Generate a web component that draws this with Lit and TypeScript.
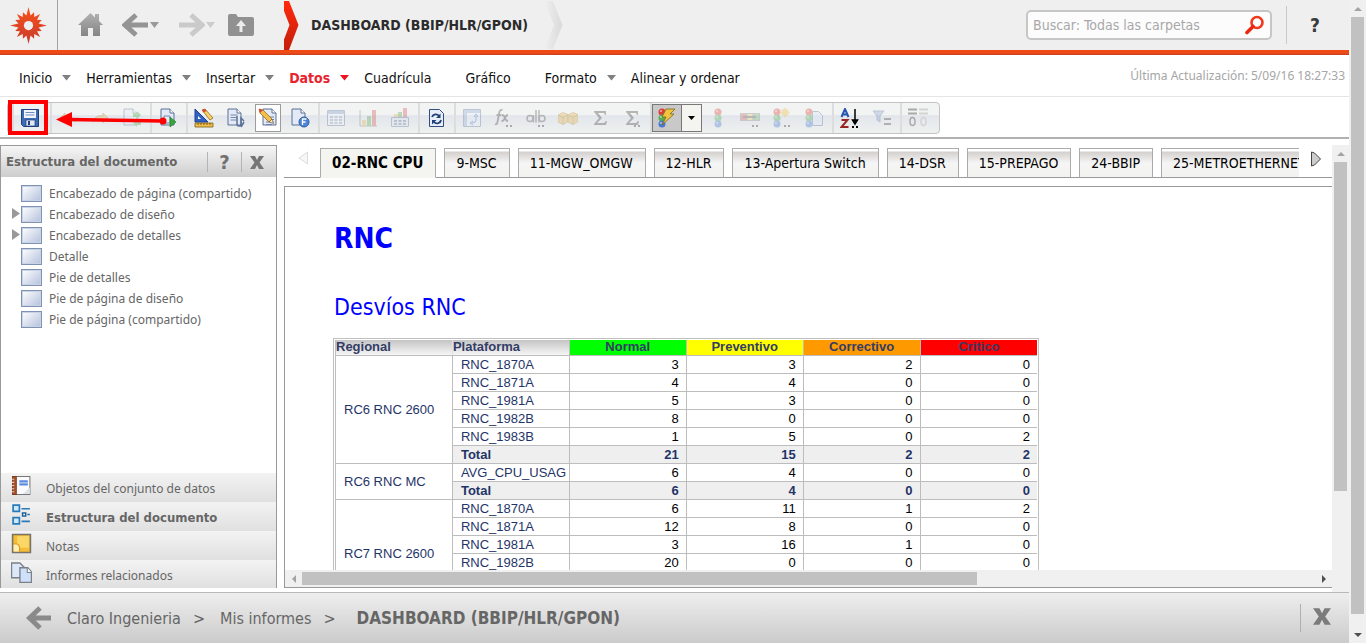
import { LitElement, html, css, svg, nothing, TemplateResult } from 'lit';
import { customElement, property } from 'lit/decorators.js';
import { classMap } from 'lit/directives/class-map.js';

/* ---------- shared icon fragments ---------- */

const page = (x = 4, y = 2) => svg`
  <path d="M${x} ${y}h9l4 4v12h-13z" fill="#e3eaf6" stroke="#5a7098"/>
  <path d="M${x + 9} ${y}v4h4" fill="#fff" stroke="#5a7098"/>`;

const pencil = svg`
  <path d="M1 1l4 1 9 9-3 3-9-9z" fill="#f3c04c" stroke="#9a6a1c" stroke-width=".8"/>
  <path d="M1 1l4 1-3 3z" fill="#d2483c"/>
  <path d="M11 14l3-3 1.500 4.500z" fill="#f5e2c3" stroke="#6b522c" stroke-width=".6"/>`;

const lights = (x: number) => svg`
  <circle cx="${x}" cy="4" r="3.500" fill="#dd3f3a"/>
  <circle cx="${x}" cy="10" r="3.500" fill="#57ad55"/>
  <circle cx="${x}" cy="16" r="3.500" fill="#4779cf"/>
  <circle cx="${x - 1}" cy="3" r="1" fill="#fff" opacity=".6"/>
  <circle cx="${x - 1}" cy="9" r="1" fill="#fff" opacity=".6"/>
  <circle cx="${x - 1}" cy="15" r="1" fill="#fff" opacity=".6"/>`;

const dots = svg`<path d="M12 17h2v2h-2zM16 17h2v2h-2z" fill="#333"/>`;

const sigma = svg`<path d="M4 3h12v4h-1l-1-2H8l4 5-5 5h7l2-2h1l-1 4H4v-1l5-6-5-6z" fill="#444"/>`;

const cube = (x: number) => svg`
  <path d="M${x} 7l5-2.500 5 2v7l-5 3-5-2.500z" fill="#eab94a" stroke="#a8802c" stroke-width=".8"/>
  <path d="M${x} 7l5 2.500 5-3M${x + 5} 9.500v7" fill="none" stroke="#a8802c" stroke-width=".8"/>`;

const icons: Record<string, TemplateResult> = {
  save: svg`
    <path d="M1.500 1.500h17v17h-15l-2-2z" fill="#3d6cb6" stroke="#1e3f80"/>
    <path d="M4 2h12v8H4z" fill="#f2f6fc"/><path d="M5.500 4.500h9M5.500 7h9" stroke="#6c8ec4"/>
    <path d="M6 12h9v6H6z" fill="#e4e9f1" stroke="#1e3f80" stroke-width=".7"/><path d="M8 13h2v4H8z" fill="#1e3f80"/>`,
  undo: svg`<path d="M2 10l5-5v3c6-1 9 2 10 6-3-3-6-3-10-2v3z" fill="#dfb65a" stroke="#a98434"/>`,
  redo: svg`<path d="M18 10l-5-5v3c-6-1-9 2-10 6 3-3 6-3 10-2v3z" fill="#dfb65a" stroke="#a98434"/>`,
  swap: svg`${page(2, 1)}<path d="M11 5h4V3l4 4-4 4V9h-4zM19 13h-4v-2l-4 4 4 4v-2h4z" fill="#49a849"/>`,
  run: svg`${page(3, 1)}<path d="M6 8h6v7H6z" fill="none" stroke="#7288ad"/><path d="M12 9l6 5-6 5z" fill="#35a83a" stroke="#20752a" stroke-width=".6"/>`,
  design: svg`
    <path d="M1 1v13h13z" fill="#2f62c4" stroke="#1c3f8c"/><path d="M4 8v3h3z" fill="#fff"/>
    <path d="M1 15h18v4H1z" fill="#f0c14a" stroke="#7c5a16" stroke-width=".8"/><path d="M4 15v2M7 15v2M10 15v2M13 15v2M16 15v2" stroke="#7c5a16"/>
    <path d="M8 2l3-1 8 9-3 2z" fill="#f7cf68" stroke="#9a6a1c" stroke-width=".8"/><path d="M8 2l3-1 1.500 2-3 1.500z" fill="#d2483c"/>`,
  attach: svg`${page(2, 1)}<path d="M4.500 7h7M4.500 9.500h6M4.500 12h6" stroke="#7288ad"/><path d="M11 8v8a2 2 0 0 0 4 0v-6l3 3M15 19l3-5" fill="none" stroke="#5a7098" stroke-width="1.500"/>`,
  edit: svg`${page(5, 1)}<path d="M8 9h8M8 11.500h8M8 14h8M8 16.500h6" stroke="#6b82aa"/>${pencil}`,
  flash: svg`${page(2, 1)}<circle cx="14" cy="14" r="5" fill="#4e85d4" stroke="#2c5cab"/><path d="M12.500 17v-6h4M12.500 14h3" stroke="#fff" stroke-width="1.300" fill="none"/>`,
  grid: svg`<path d="M1.500 2.500h17v15h-17z" fill="#eef2f8" stroke="#60779f"/><path d="M2 3h16v3H2z" fill="#7d9bcb"/><path d="M4 8h3v2H4zM8.500 8h3v2h-3zM13 8h3v2h-3zM4 11h3v2H4zM8.500 11h3v2h-3zM13 11h3v2h-3zM4 14h3v2H4zM8.500 14h3v2h-3zM13 14h3v2h-3z" fill="#8ea0bd"/>`,
  chart: svg`<path d="M2 2v16h17" fill="none" stroke="#777"/><path d="M4 12h4v6H4z" fill="#e5b64c"/><path d="M9 8h4v10H9z" fill="#5cab55"/><path d="M14 2h4v16h-4z" fill="#d95b58"/>`,
  gridChart: svg`<path d="M4 6h4v3H4z" fill="#e5b64c"/><path d="M8 4h4v5H8z" fill="#5cab55"/><path d="M13 0h4v9h-4z" fill="#d95b58"/><path d="M1.500 9.500h17v9h-17z" fill="#dde3ec" stroke="#60779f"/><path d="M4 12h3v2H4zM8.500 12h3v2h-3zM13 12h3v2h-3zM4 15h3v2H4zM8.500 15h3v2h-3zM13 15h3v2h-3z" fill="#66799a"/>`,
  refresh: svg`<path d="M3.500 1.500h10l4 4v13h-14z" fill="#e8eef8" stroke="#2f4d80"/><path d="M6 9a4 4 0 0 1 7-1M15 12a4 4 0 0 1-7 2" fill="none" stroke="#1f3f78" stroke-width="1.800"/><path d="M14.500 5.500v4.500H10zM6 16.500V12h4.500z" fill="#1f3f78"/>`,
  pivot: svg`<path d="M1.500 1.500h17v17h-17z" fill="#e7eef9" stroke="#60779f"/><path d="M2 2h16v3H2zM2 5h3v13H2z" fill="#93aed9"/><path d="M14 8v4q0 3-4 3M12 9l2-3 2 3M11 13l-3 2 3 2" fill="none" stroke="#2e64c0"/>`,
  fx: svg`<path d="M8.500 2q-3-1-3.500 4l-1.500 8q-.5 3-2.500 2M2.500 7h5" fill="none" stroke="#444" stroke-width="1.800"/><path d="M8 7q2 0 3 3t3 3M14 7q-2 0-3 3t-3.500 3" fill="none" stroke="#444" stroke-width="1.800"/>${dots}`,
  alb: svg`<circle cx="4" cy="10.500" r="3" fill="none" stroke="#555" stroke-width="1.500"/><path d="M7.500 7v7.500M10 2v12.500M13 2v12.500" stroke="#555" stroke-width="1.500"/><circle cx="16" cy="10.500" r="3" fill="none" stroke="#555" stroke-width="1.500"/>${dots}`,
  cubes: svg`${cube(0)}${cube(10)}`,
  sum: sigma,
  sumMore: svg`${sigma}${dots}`,
  lights: lights(10),
  legend: svg`<path d="M0 5h20v8H0z" fill="#8a8a8a"/><path d="M1 6h5v6H1z" fill="#dd6560"/><path d="M7.500 6h5v6h-5z" fill="#eed36a"/><path d="M14 6h5v6h-5z" fill="#74bb6d"/><path d="M3 9h13" stroke="#444" stroke-width="1.500"/>${dots}`,
  lightsNew: svg`${lights(5)}<path d="M13 0v9M8.500 4.500h9M10 1.500l6 6M16 1.500l-6 6" stroke="#eebb3c" stroke-width="1.800"/>${dots}`,
  lightsPage: svg`<path d="M8.500 3.500h6l4 4v10h-10z" fill="#dbe6f6" stroke="#60779f"/>${lights(5)}`,
  thresholds: svg`${lights(5)}<path d="M9 1h9l-5 5h4L5 17l4-8H5z" fill="#efc63e" stroke="#7e6420" stroke-width=".8"/>`,
  sort: svg`<path d="M1.500 9l3.500-8 3.500 8M3 6.500h4" fill="none" stroke="#2455b0" stroke-width="2"/><path d="M1.500 12h6l-6 7h7" fill="none" stroke="#9b2525" stroke-width="2"/><path d="M15 1v14M12.500 12l2.500 4 2.500-4z" stroke="#000" stroke-width="1.500"/><path d="M12 18h2v2h-2zM16 18h2v2h-2z" fill="#000"/>`,
  filter: svg`<path d="M1 3h11l-4 5v6l-3-2V8z" fill="#8da7cf" stroke="#60779f"/><path d="M12 11h7M12 16h7" stroke="#444" stroke-width="2"/>`,
  banding: svg`<path d="M0 1.500h9M0 5.500h9" stroke="#222" stroke-width="2"/><path d="M11 1.500h9M11 5.500h9" stroke="#999" stroke-width="2"/><ellipse cx="4.500" cy="13.500" rx="2.500" ry="4" fill="none" stroke="#333" stroke-width="1.500"/><ellipse cx="15.500" cy="13.500" rx="2.500" ry="4" fill="none" stroke="#aaa" stroke-width="1.500"/>`,
  objects: svg`<path d="M4 1.500h14v17H4z" fill="#fbfbfd" stroke="#777"/><path d="M1.500 1.500H5v17H1.500z" fill="#a9562f" stroke="#7e3c1d"/><path d="M1 4h2M1 7h2M1 10h2M1 13h2M1 16h2" stroke="#e7d2c6"/><path d="M8 5h8v5H8z" fill="#5b8be0"/><path d="M8 7.500h8" stroke="#cfe0fb"/><path d="M11 18l7-6v6z" fill="#dde4e8"/>`,
  structure: svg`<path d="M2 1h6v6H2zM2 13h6v6H2z" fill="#cdeafb" stroke="#2a7ab8" stroke-width="1.600"/><path d="M10 4.500h8M15.500 10h2.500M10 16.500h8" stroke="#2a7ab8" stroke-width="1.600"/><path d="M11 8.500h3v3h-3z" fill="#fff" stroke="#1d6299" stroke-width="1.400"/>`,
  notes: svg`<path d="M1.500 1.500h17v17h-17z" fill="#f5bd35" stroke="#77726a" stroke-width="1.500"/><path d="M6 3h11v11H6z" fill="#fbd768"/><path d="M2.500 11c4-1 6 1 5 6.500h-5z" fill="#fff0b8"/><path d="M2.500 10.500c5-1 6.500 2 5.500 7" fill="none" stroke="#df9a1d"/>`,
  reports: svg`<path d="M.5 1h8l4 4v10H.5z" fill="#dce8f9" stroke="#7b7f88" stroke-width="1.300"/><path d="M8.500 5.500h7.500l3.500 4V19.500H8.500z" fill="#cfe0fa" stroke="#7b7f88" stroke-width="1.300"/><path d="M15.500 5.500V10h4" fill="#fff" stroke="#7b7f88"/>`,
};

const icon = (name: string, size = 20) =>
  html`<svg width=${size} height=${size} viewBox="0 0 20 20" aria-hidden="true">${icons[name]}</svg>`;

const sans = css`'DejaVu Sans Condensed', 'Noto Sans', sans-serif`;
const small = css`'Noto Sans', 'DejaVu Sans Condensed', sans-serif`;

/* ---------- scroll bar ---------- */

@customElement('scroll-bar')
class ScrollBar extends LitElement {
  @property({ type: Boolean, reflect: true }) horizontal = false;
  @property({ type: Number }) size = 50;
  @property({ type: Boolean }) endless = false;

  static styles = css`
    :host { display: flex; flex-direction: column; width: 17px; background: #f0f0f0; }
    :host([horizontal]) { flex-direction: row; width: auto; height: 17px; }
    .end { flex: 0 0 17px; display: grid; place-items: center; }
    .track { flex: 1; min-width: 0; min-height: 0; display: flex; justify-content: center; }
    .thumb { background: #c1c1c1; width: 13px; }
    :host([horizontal]) .track { justify-content: flex-start; align-items: center; }
    :host([horizontal]) .thumb { height: 13px; }
  `;

  render() {
    const style = `${this.horizontal ? 'width' : 'height'}:${this.size}%`;
    const first = this.horizontal ? 'M7 1v8L3 5z' : 'M1 7h8L5 3z';
    const last = this.horizontal ? 'M3 1v8l4-4z' : 'M1 3h8L5 7z';
    return html`
      <div class="end"><svg width="10" height="10"><path d=${first} fill="#a3a3a3" /></svg></div>
      <div class="track"><div class="thumb" style=${style}></div></div>
      ${this.endless
        ? nothing
        : html`<div class="end"><svg width="10" height="10"><path d=${last} fill="#505050" /></svg></div>`}
    `;
  }
}

/* ---------- top bar ---------- */

// Sixteen-pointed burst; the four compass points reach furthest.
const burst = Array.from({ length: 32 }, (_, i) => {
  const r = i % 2 ? 10 : i % 8 === 0 ? 18 : i % 4 === 0 ? 16 : 14;
  const a = (i * Math.PI) / 16;
  return `${(18 + r * Math.sin(a)).toFixed(1)},${(18 - r * Math.cos(a)).toFixed(1)}`;
}).join(' ');

@customElement('top-bar')
class TopBar extends LitElement {
  static styles = css`
    :host {
      display: flex; align-items: center; height: 50px; padding-bottom: 5px; font-family: ${sans};
      background: linear-gradient(#efefef 50px, #f04a16 50px, #ee4b17 53px, #c23f22 55px);
    }
    button { border: 0; padding: 0; background: none; display: flex; align-items: center; }
    .logo { width: 58px; height: 50px; justify-content: center; border-right: 1px solid #a3a3a3; }
    nav { display: flex; align-items: center; margin-left: 20px; }
    .home { width: 44px; }
    .step { width: 56px; gap: 1px; }
    .dim { width: 50px; opacity: .4; }
    .up { width: 56px; }
    .chevron { display: block; }
    h1 { margin: 0 16px 0 7px; font-size: 14px; line-height: 20px; color: #2b2b2b; white-space: nowrap; }
    .space { flex: 1; }
    form {
      display: flex; align-items: center; box-sizing: border-box; width: 246px; height: 30px; padding: 0 5px;
      border: 2px solid #c6c6c6; border-radius: 5px; background: #fcfcfc;
    }
    input { flex: 1; min-width: 0; border: 0; padding: 0; outline: 0; background: none; font: 14px ${sans}; color: #555; }
    input::placeholder { color: #a8a8a8; opacity: 1; }
    .help {
      width: 63px; height: 38px; margin-left: 14px; justify-content: center;
      border-left: 1px solid #c9c9c9; font: bold 19px ${sans}; color: #3a3a3a; padding-right: 6px;
    }
  `;

  render() {
    return html`
      <button class="logo" aria-label="MicroStrategy">
        <svg width="37" height="37" viewBox="0 0 36 36">
          <defs><linearGradient id="s" x2="0" y2="1"><stop stop-color="#f8531c" /><stop offset="1" stop-color="#c83a2c" /></linearGradient></defs>
          <polygon points=${burst} fill="url(#s)" />
          <circle cx="18" cy="18" r="4.500" fill="#efefef" />
        </svg>
      </button>
      <nav>
        <button class="home" aria-label="Inicio">
          <svg width="25" height="24" viewBox="0 0 25 24">
            <defs><linearGradient id="g" x2="0" y2="1"><stop stop-color="#b0b0b0" /><stop offset="1" stop-color="#858585" /></linearGradient></defs>
            <path d="M12.500 0L0 12h3v11h7v-8h5v8h7V12h3l-4-4V1h-4v3.500z" fill="url(#g)" />
          </svg>
        </button>
        ${['Atrás', 'Adelante'].map(
          (label, i) => html`
            <button class=${classMap({ step: true, dim: i === 1 })} aria-label=${label}>
              <svg width="27" height="24" viewBox="0 0 27 24">
                <path d="M14 2L3 12l11 10M4 12h22" transform=${i ? 'translate(27) scale(-1 1)' : ''} fill="none" stroke="#949494" stroke-width="5" />
              </svg>
              <svg width="9" height="6"><path d="M0 0h9L4.500 6z" fill="#999" /></svg>
            </button>`,
        )}
        <button class="up" aria-label="Carpeta superior">
          <svg width="26" height="22" viewBox="0 0 26 22">
            <path d="M0 2q0-2 2-2h6l2 3h14q2 0 2 2v15q0 2-2 2H2q-2 0-2-2z" fill="#919191" />
            <path d="M13 6l5 6h-3.500v6h-3v-6H8z" fill="#ececec" />
          </svg>
        </button>
      </nav>
      <svg class="chevron" width="20" height="50" viewBox="0 0 20 50">
        <defs><linearGradient id="r" x2="0" y2="1"><stop stop-color="#ff2a0c" /><stop offset="1" stop-color="#c41e0c" /></linearGradient></defs>
        <path d="M-4 1h9l9.500 24L5 50h-9l9.500-25z" fill="url(#r)" />
      </svg>
      <h1>DASHBOARD (BBIP/HLR/GPON)</h1>
      <svg class="chevron" width="20" height="50" viewBox="0 0 20 50">
        <defs><linearGradient id="w"><stop stop-color="#efefef" /><stop offset="1" stop-color="#dadada" /></linearGradient></defs>
        <path d="M0 1h9l9.500 24L9 49H0l10-24z" fill="url(#w)" />
      </svg>
      <div class="space"></div>
      <form>
        <input type="text" aria-label="Buscar" placeholder="Buscar: Todas las carpetas" />
        <button type="button" aria-label="Buscar">
          <svg width="20" height="20" viewBox="0 0 20 20">
            <circle cx="12" cy="7.500" r="5.500" fill="#fff" stroke="#f0381c" stroke-width="2.600" />
            <path d="M8 11.500l-6 6" stroke="#e8290f" stroke-width="3.600" stroke-linecap="round" />
          </svg>
        </button>
      </form>
      <button class="help" aria-label="Ayuda">?</button>
    `;
  }
}

/* ---------- menu and tool bar ---------- */

const menus = [
  { label: 'Inicio', arrow: true },
  { label: 'Herramientas', arrow: true },
  { label: 'Insertar', arrow: true },
  { label: 'Datos', arrow: true, active: true },
  { label: 'Cuadrícula' },
  { label: 'Gráfico' },
  { label: 'Formato', arrow: true },
  { label: 'Alinear y ordenar' },
];

type Tool = [name: string, label: string, state?: 'on' | 'split' | 'off'];

const toolGroups: Tool[][] = [
  [['save', 'Guardar']],
  [['undo', 'Deshacer', 'off'], ['redo', 'Rehacer', 'off'], ['swap', 'Intercambiar', 'off']],
  [['run', 'Ejecutar']],
  [['design', 'Modo diseño'], ['attach', 'Modo interactivo'], ['edit', 'Modo editable', 'on'], ['flash', 'Modo Flash']],
  [['grid', 'Cuadrícula', 'off'], ['chart', 'Gráfico', 'off'], ['gridChart', 'Cuadrícula y gráfico', 'off']],
  [['refresh', 'Actualizar']],
  [['pivot', 'Intercambiar filas', 'off'], ['fx', 'Insertar indicador', 'off'], ['alb', 'Cambiar nombre', 'off'],
   ['cubes', 'Objetos', 'off'], ['sum', 'Totales', 'off'], ['sumMore', 'Editar totales', 'off']],
  [['thresholds', 'Umbrales', 'split'], ['lights', 'Umbral rápido', 'off'], ['legend', 'Leyenda', 'off'],
   ['lightsNew', 'Umbral nuevo', 'off'], ['lightsPage', 'Umbrales del informe', 'off']],
  [['sort', 'Ordenar'], ['filter', 'Filtro', 'off']],
  [['banding', 'Bandas', 'off']],
];

@customElement('command-bar')
class CommandBar extends LitElement {
  static styles = css`
    :host { display: block; font-family: ${sans}; background: #fff; }
    button { font: inherit; border: 0; padding: 0; background: none; }
    .menu { display: flex; align-items: center; height: 41px; padding: 0 4px 0 19px; border-bottom: 1px solid #e5e5e5; }
    .item { display: flex; align-items: center; gap: 10px; font-size: 14px; line-height: 20px; color: #111; white-space: nowrap; margin-right: 15px; padding-top: 4px; }
    .plain { margin-right: 34px; }
    .active { color: #e8232e; font-weight: bold; }
    .updated { margin-left: auto; font: 12px ${small}; color: #a6a6a6; white-space: nowrap; }
    .row { position: relative; padding: 5px 7px 3px; border-bottom: 2px solid #b0b0b0; }
    .tools {
      display: flex; width: max-content; height: 30px; padding: 0 3px 0 4px; border: 1px solid #c3c3c3; border-radius: 4px;
      background: linear-gradient(#f2f3f3 0 40%, #e2e6ec 42%, #eef0ef 95%);
    }
    .group { display: flex; align-items: center; border-left: 2px solid #dcdddf; padding-right: 2px; }
    .group:first-child { padding-right: 4px; }
    .tool { width: 32px; height: 28px; display: grid; place-items: center; }
    .off svg { opacity: .35; }
    .on { width: 26px; margin: 0 3px; background: #fff; border: 1px solid #9c9c9c; }
    .split { width: 30px; background: #c9c9c9; border: 1px solid #777; }
    .drop { width: 20px; height: 28px; background: #f4f4f0; border: 1px solid #777; border-left: 0; display: grid; place-items: center; }
    .mark { position: absolute; left: 8px; top: 3px; }
  `;

  render() {
    return html`
      <div class="menu">
        ${menus.map(
          (m) => html`<button class=${classMap({ item: true, plain: !m.arrow, active: !!m.active })}>
            ${m.label}
            ${m.arrow ? html`<svg width="9" height="6"><path d="M0 0h9L4.500 5.500z" fill=${m.active ? '#f0121e' : '#808080'} /></svg>` : nothing}
          </button>`,
        )}
        <span class="updated">Última Actualización: 5/09/16 18:27:33</span>
      </div>
      <div class="row">
        <div class="tools">
          ${toolGroups.map(
            (g) => html`<div class="group">
              ${g.map(
                ([name, label, state]) => html`<button class="tool ${state ?? ''}" aria-label=${label}>${icon(name)}</button>
                  ${state === 'split'
                    ? html`<button class="drop" aria-label="Más umbrales"><svg width="7" height="4"><path d="M0 0h7L3.500 4z" /></svg></button>`
                    : nothing}`,
              )}
            </div>`,
          )}
        </div>
        <svg class="mark" width="160" height="36" viewBox="0 0 160 36">
          <rect x="2" y="2" width="36" height="31" fill="none" stroke="#f00" stroke-width="4" />
          <path d="M60 19.500L155 21" stroke="#f00" stroke-width="3.500" />
          <path d="M48 19.500l16-7.500v15z" fill="#f00" />
          <circle cx="155" cy="21" r="3.500" fill="#f00" />
        </svg>
      </div>
    `;
  }
}

/* ---------- document structure panel ---------- */

const sections = [
  { label: 'Encabezado de página (compartido)' },
  { label: 'Encabezado de diseño', open: true },
  { label: 'Encabezado de detalles', open: true },
  { label: 'Detalle' },
  { label: 'Pie de detalles' },
  { label: 'Pie de página de diseño' },
  { label: 'Pie de página (compartido)' },
];

const panels = [
  { icon: 'objects', label: 'Objetos del conjunto de datos' },
  { icon: 'structure', label: 'Estructura del documento', active: true },
  { icon: 'notes', label: 'Notas' },
  { icon: 'reports', label: 'Informes relacionados' },
];

@customElement('structure-panel')
class StructurePanel extends LitElement {
  static styles = css`
    :host {
      display: flex; flex-direction: column; box-sizing: border-box; width: 277px; font-family: ${sans}; color: #666;
      border: 1px solid #999; border-bottom: 0; background: #fff;
    }
    header { display: flex; align-items: center; height: 31px; padding-left: 5px; background: linear-gradient(#f6f6f6, #cdcdcd); }
    h2 { flex: 1; margin: 0; font-size: 13px; line-height: 20px; white-space: nowrap; }
    header button {
      width: 34px; height: 20px; padding: 0; border: 0; border-left: 1px solid #b4b4b4; background: none;
      font: bold 20px/20px ${sans}; color: #717171;
    }
    header button:last-child { padding-right: 4px; width: 35px; }
    ul { list-style: none; margin: 0; padding: 6px 0 0 11px; flex: 1; }
    li { display: flex; align-items: center; height: 21px; font: 12px ${small}; }
    .twist { width: 9px; }
    .box {
      width: 21px; height: 17px; box-sizing: border-box; border: 1px solid #7f92b4; margin-right: 7px;
      background: linear-gradient(135deg, #fff, #b4c1dc); box-shadow: inset 0 0 0 1px #c9d3e6;
    }
    .panel {
      display: flex; align-items: center; gap: 14px; height: 29px; width: 100%; border: 0; padding: 0 0 0 10px;
      background: linear-gradient(#f3f3f3, #e0e0e0); font: 12px ${small}; color: #666;
    }
    .panel:last-child { height: 28px; }
    .panel svg { margin-bottom: 4px; flex: none; }
    .panel span { padding-top: 2px; }
    .current { font: bold 13px ${sans}; }
  `;

  render() {
    return html`
      <header>
        <h2>Estructura del documento</h2>
        <button aria-label="Ayuda">?</button>
        <button aria-label="Cerrar"><svg width="14" height="13" viewBox="0 0 14 13"><path d="M0 0h5l2 4 2-4h5L9.500 6.500 14 13H9L7 9l-2 4H0l4.500-6.500z" fill="#757575" /></svg></button>
      </header>
      <ul>
        ${sections.map(
          (s) => html`<li>
            <span class="twist">${s.open ? html`<svg width="8" height="11"><path d="M0 0l8 5.500L0 11z" fill="#999" /></svg>` : nothing}</span>
            <span class="box"></span>${s.label}
          </li>`,
        )}
      </ul>
      ${panels.map(
        (p) => html`<button class=${classMap({ panel: true, current: !!p.active })}>${icon(p.icon, 21)}<span>${p.label}</span></button>`,
      )}
    `;
  }
}

/* ---------- report ---------- */

const tabs = ['02-RNC CPU', '9-MSC', '11-MGW_OMGW', '12-HLR', '13-Apertura Switch', '14-DSR', '15-PREPAGO', '24-BBIP', '25-METROETHERNET'];

type Row = [string, number, number, number, number];
const regions: { name: string; rows: Row[] }[] = [
  {
    name: 'RC6 RNC 2600',
    rows: [
      ['RNC_1870A', 3, 3, 2, 0], ['RNC_1871A', 4, 4, 0, 0], ['RNC_1981A', 5, 3, 0, 0],
      ['RNC_1982B', 8, 0, 0, 0], ['RNC_1983B', 1, 5, 0, 2], ['Total', 21, 15, 2, 2],
    ],
  },
  { name: 'RC6 RNC MC', rows: [['AVG_CPU_USAG', 6, 4, 0, 0], ['Total', 6, 4, 0, 0]] },
  {
    name: 'RC7 RNC 2600',
    rows: [
      ['RNC_1870A', 6, 11, 1, 2], ['RNC_1871A', 12, 8, 0, 0], ['RNC_1981A', 3, 16, 1, 0],
      ['RNC_1982B', 20, 0, 0, 0], ['RNC_1983B', 8, 9, 0, 1], ['Total', 49, 44, 2, 3],
    ],
  },
];

@customElement('report-view')
class ReportView extends LitElement {
  static styles = css`
    :host { display: flex; flex-direction: column; flex: 1; min-width: 0; font-family: ${sans}; }
    .tabs { display: flex; align-items: stretch; height: 30px; padding-top: 3px; }
    .page { border: 0; padding: 0 10px 7px 12px; background: none; border-bottom: 1px solid #999; box-sizing: border-box; width: 36px; }
    .next { width: 33px; padding: 0 10px 4px; }
    .strip { flex: 1; display: flex; overflow: hidden; }
    .tab {
      box-sizing: border-box; height: 30px; padding: 0 12px 0 11px; font: 14px ${sans}; color: #000; white-space: nowrap; flex: none;
      border: 1px solid #ababab; border-bottom-color: #999; background: linear-gradient(#fff 2px, #d3d0ce 3px, #f6f5f5 50%, #f2f2f0);
    }
    .gap { flex: 0 0 8px; border-bottom: 1px solid #999; }
    .sel { font-size: 15px; font-weight: bold; background: #f4f4f0; border-bottom-color: #f4f4f0; }
    .frame { flex: 1; min-height: 0; display: flex; flex-direction: column; margin-top: 8px; border: 1px solid #999; border-right: 0; }
    .canvas { flex: 1; min-height: 0; overflow: hidden; padding: 36px 0 0 48px; }
    h2, h3 { margin: 0; color: #00f; padding-left: 1px; white-space: nowrap; }
    h2 { font-size: 28px; line-height: 32px; }
    h3 { font-size: 23px; line-height: 30px; font-weight: normal; margin: 37px 0 16px; }
    .outer { width: 706px; box-sizing: border-box; border: 1px solid #c0c0c0; padding: 1px; }
    table { border-collapse: collapse; table-layout: fixed; width: 702px; font: 13px 'Liberation Sans', Arial, sans-serif; color: #1f3468; }
    th, td { box-sizing: border-box; height: 18px; padding: 0; line-height: 15px; border: 1px solid #bdbdbd; overflow: hidden; white-space: nowrap; }
    thead th { border-top: 0; height: 15px; line-height: 14px; text-align: center; color: #333d66; }
    tr > *:last-child { border-right: 0; }
    thead .lead { text-align: left; background: linear-gradient(#c4c4c4, #f6f6f6); }
    .lead:first-child { border-right-color: #e2e2e2; }
    .region { padding-left: 8px; text-align: left; font-weight: normal; }
    .normal { background: #0f0; }
    .preventive { background: #ff0; }
    .corrective { background: #f90; }
    .critical { background: #f00; }
    .platform { padding-left: 8px; }
    .num { text-align: right; padding-right: 7px; color: #000; }
    .total td { font-weight: bold; background: #efefef; color: #1f3468; }
  `;

  render() {
    return html`
      <div class="tabs">
        <button class="page" aria-label="Pestañas anteriores"><svg width="12" height="16"><path d="M10.500 2v12L2 8z" fill="#f6f6f6" stroke="#ddd" /></svg></button>
        <div class="strip" role="tablist">
          ${tabs.map(
            (t, i) => html`<button role="tab" aria-selected=${i === 0} class=${classMap({ tab: true, sel: i === 0 })}>${t}</button><span class="gap"></span>`,
          )}
        </div>
        <button class="page next" aria-label="Pestañas siguientes"><svg width="12" height="16"><path d="M1.500 1v14l3-1 6-6-6-6z" fill="#ccc" stroke="#444" /></svg></button>
      </div>
      <div class="frame">
        <div class="canvas">
          <h2>RNC</h2>
          <h3>Desvíos RNC</h3>
          <div class="outer">
            <table>
              <thead>
                <tr>
                  <th class="lead">Regional</th><th class="lead">Plataforma</th><th class="normal">Normal</th>
                  <th class="preventive">Preventivo</th><th class="corrective">Correctivo</th><th class="critical">Critico</th>
                </tr>
              </thead>
              <tbody>
                ${regions.map((r) =>
                  r.rows.map(
                    ([name, ...values], i) => html`<tr class=${name === 'Total' ? 'total' : ''}>
                      ${i === 0 ? html`<th class="region" scope="rowgroup" rowspan=${r.rows.length}>${r.name}</th>` : nothing}
                      <td class="platform">${name}</td>
                      ${values.map((v) => html`<td class="num">${v}</td>`)}
                    </tr>`,
                  ),
                )}
              </tbody>
            </table>
          </div>
        </div>
        <scroll-bar horizontal .size=${66.6}></scroll-bar>
      </div>
    `;
  }
}

/* ---------- page ---------- */

@customElement('app-root')
class AppRoot extends LitElement {
  static styles = css`
    :host { display: flex; height: 100vh; overflow: hidden; background: #fff; }
    .page { flex: 1; min-width: 0; display: flex; flex-direction: column; }
    .work { flex: 1; min-height: 0; display: flex; padding-top: 6px; }
    report-view { margin: 0 0 4px 7px; }
    structure-panel { margin-bottom: 4px; }
    footer {
      display: flex; align-items: center; height: 50px; border-top: 1px solid #b8b8b8; padding: 0 18px 0 26px;
      background: linear-gradient(#eee, #cbcbcb); font: 16px ${sans}; color: #666; white-space: nowrap;
    }
    footer a { color: inherit; text-decoration: none; }
    .sep { margin: 0 15px 0 12px; }
    .here { margin-left: 6px; font-size: 17px; }
    button { border: 0; background: none; padding: 0; }
    .back { margin-right: 16px; height: 24px; }
    .close { margin-left: auto; border-left: 1px solid #b0b0b0; padding-left: 12px; height: 28px; }
  `;

  render() {
    return html`
      <div class="page">
        <top-bar></top-bar>
        <command-bar></command-bar>
        <div class="work">
          <structure-panel></structure-panel>
          <report-view></report-view>
          <scroll-bar endless .size=${76.4}></scroll-bar>
        </div>
        <footer>
          <button class="back" aria-label="Volver"><svg width="25" height="24" viewBox="0 0 25 24"><path d="M14 2L3.500 12 14 22M4 12h21" fill="none" stroke="#8a8a8a" stroke-width="5" /></svg></button>
          <a href="#">Claro Ingenieria</a><span class="sep">&gt;</span>
          <a href="#">Mis informes</a><span class="sep">&gt;</span>
          <strong class="here">DASHBOARD (BBIP/HLR/GPON)</strong>
          <button class="close" aria-label="Cerrar"><svg width="18" height="17" viewBox="0 0 14 13"><path d="M0 0h5l2 4 2-4h5L9.500 6.500 14 13H9L7 9l-2 4H0l4.500-6.500z" fill="#7b7b7b" /></svg></button>
        </footer>
      </div>
      <scroll-bar .size=${98}></scroll-bar>
    `;
  }
}
